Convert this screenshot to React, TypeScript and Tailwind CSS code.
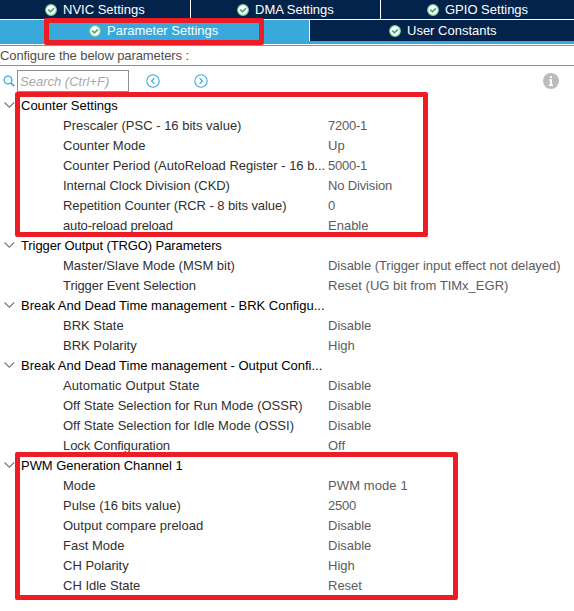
import React from "react";

type Param = { name: string; value: string; nameClass?: string; valueClass?: string };
type Group = { title: string; titleClass?: string; params: Param[] };

const groups: Group[] = [
  {
    title: "Counter Settings",
    params: [
      { name: "Prescaler (PSC - 16 bits value)", value: "7200-1", valueClass: "tracking-[-0.25px]" },
      { name: "Counter Mode", value: "Up" },
      {
        name: "Counter Period (AutoReload Register - 16 b...",
        value: "5000-1",
        nameClass: "tracking-[-0.02px]",
        valueClass: "tracking-[-0.25px]",
      },
      {
        name: "Internal Clock Division (CKD)",
        value: "No Division",
        nameClass: "tracking-[-0.05px]",
        valueClass: "tracking-[-0.15px]",
      },
      { name: "Repetition Counter (RCR - 8 bits value)", value: "0", nameClass: "tracking-[-0.07px]" },
      { name: "auto-reload preload", value: "Enable", nameClass: "tracking-[-0.16px]" },
    ],
  },
  {
    title: "Trigger Output (TRGO) Parameters",
    titleClass: "tracking-[-0.1px]",
    params: [
      {
        name: "Master/Slave Mode (MSM bit)",
        value: "Disable (Trigger input effect not delayed)",
        valueClass: "tracking-[-0.04px]",
      },
      { name: "Trigger Event Selection", value: "Reset (UG bit from TIMx_EGR)", nameClass: "tracking-[-0.08px]" },
    ],
  },
  {
    title: "Break And Dead Time management - BRK Configu...",
    params: [
      { name: "BRK State", value: "Disable" },
      { name: "BRK Polarity", value: "High" },
    ],
  },
  {
    title: "Break And Dead Time management - Output Confi...",
    params: [
      { name: "Automatic Output State", value: "Disable", nameClass: "tracking-[0.1px]" },
      { name: "Off State Selection for Run Mode (OSSR)", value: "Disable" },
      { name: "Off State Selection for Idle Mode (OSSI)", value: "Disable" },
      { name: "Lock Configuration", value: "Off", nameClass: "tracking-[-0.08px]" },
    ],
  },
  {
    title: "PWM Generation Channel 1",
    titleClass: "tracking-[-0.04px]",
    params: [
      { name: "Mode", value: "PWM mode 1", valueClass: "tracking-[0.1px]" },
      { name: "Pulse (16 bits value)", value: "2500", valueClass: "tracking-[-0.2px]" },
      { name: "Output compare preload", value: "Disable" },
      { name: "Fast Mode", value: "Disable" },
      { name: "CH Polarity", value: "High" },
      { name: "CH Idle State", value: "Reset" },
    ],
  },
];

function CheckBadge() {
  return (
    <svg width="12" height="12" viewBox="0 0 12 12" className="shrink-0">
      <circle cx="6" cy="6" r="5.3" fill="#fff" stroke="#86cfa0" strokeWidth="1.2" />
      <path d="M3.2 5.7 5.4 7.9 8.9 4.3" fill="none" stroke="#43ab6c" strokeWidth="1.7" />
    </svg>
  );
}

function Tab({ label, className }: { label: string; className: string }) {
  return (
    <div className={`flex items-center gap-1.5 text-white ${className}`}>
      <CheckBadge />
      <span>{label}</span>
    </div>
  );
}

function ArrowButton({ d }: { d: string }) {
  return (
    <svg width="14" height="14" viewBox="0 0 14 14" fill="none" stroke="#39a9dc">
      <circle cx="7" cy="7" r="6.2" strokeWidth="1.1" />
      <path d={d} strokeWidth="1.2" />
    </svg>
  );
}

function GroupRows({ group }: { group: Group }) {
  return (
    <section>
      <div className="flex h-5 items-center text-black">
        <svg width="11" height="6" viewBox="0 0 11 6" className="mr-1.5 mb-0.5 ml-1 shrink-0">
          <path d="M.5 .5 5.3 5.2 10.2 .5" fill="none" stroke="#777" strokeWidth="1.1" />
        </svg>
        <span className={group.titleClass}>{group.title}</span>
      </div>
      {group.params.map((p) => (
        <div key={p.name} className="flex h-5 items-center pl-[63px]">
          <span className={`w-[265px] shrink-0 text-[#303030] ${p.nameClass ?? ""}`}>{p.name}</span>
          <span className={`text-[#5c5c5c] ${p.valueClass ?? ""}`}>{p.value}</span>
        </div>
      ))}
    </section>
  );
}

export default function App() {
  return (
    <div className="relative h-[611px] w-[574px] overflow-hidden bg-white font-['Liberation_Sans',Arial,sans-serif] text-[13px] leading-5 whitespace-nowrap">
      <header className="bg-white">
        <div className="flex h-[19px] gap-px">
          <Tab label="NVIC Settings" className="w-[190px] bg-[#03234b] pt-px pl-[45px]" />
          <Tab label="DMA Settings" className="w-[189px] bg-[#03234b] pt-px pl-[46px]" />
          <Tab label="GPIO Settings" className="flex-1 bg-[#03234b] pt-px pl-[46px]" />
        </div>
        <div className="mt-px flex h-[21px] gap-px bg-white">
          <Tab label="Parameter Settings" className="w-[309px] bg-[#39a9dc] pl-[89px]" />
          <Tab label="User Constants" className="flex-1 bg-[#03234b] pl-[79px]" />
        </div>
        <div className="h-[3px] bg-[#39a9dc]" />
      </header>
      <div className="mt-px h-[21px] border-y border-[#8b8f96] leading-[19px] text-[#4f4f4f]">
        <span className="tracking-[-0.1px]">Configure the below parameters :</span>
      </div>
      <div className="flex h-[30px] items-center">
        <svg width="12" height="12" viewBox="0 0 12 12" className="ml-[3px] shrink-0" fill="none" stroke="#39a9dc">
          <circle cx="5" cy="5" r="3.9" strokeWidth="1.4" />
          <path d="m7.8 7.8 3.4 3.4" strokeWidth="1.8" />
        </svg>
        <div className="ml-0.5 h-[22px] w-28 border border-[#8b8f96] pl-0.5 leading-[21px] text-[#a8a8a8] italic">
          Search (Ctrl+F)
        </div>
        <div className="ml-[17px] flex gap-[34px]">
          <ArrowButton d="M8.4 4.2 5.6 7l2.8 2.8" />
          <ArrowButton d="M5.6 4.2 8.4 7 5.6 9.8" />
        </div>
        <svg width="16" height="16" viewBox="0 0 16 16" className="mr-[15px] ml-auto">
          <circle cx="8" cy="8" r="8" fill="#bcbcbc" />
          <path d="M7 3h2v2H7zM6.2 6.2H9v5.3h1V13H6v-1.5h1V7.5h-.8z" fill="#fff" />
        </svg>
      </div>
      <main>
        {groups.map((g) => (
          <GroupRows key={g.title} group={g} />
        ))}
      </main>
      <div className="absolute top-[18px] left-[44px] h-[27px] w-[220px] rounded-[2px] border-[5px] border-[#ee1c25]" />
      <div className="absolute top-[92px] left-[15px] h-[145px] w-[413px] rounded-[2px] border-[5px] border-[#ee1c25]" />
      <div className="absolute top-[452px] left-[15px] h-[148px] w-[443px] rounded-[2px] border-[5px] border-[#ee1c25]" />
    </div>
  );
}
